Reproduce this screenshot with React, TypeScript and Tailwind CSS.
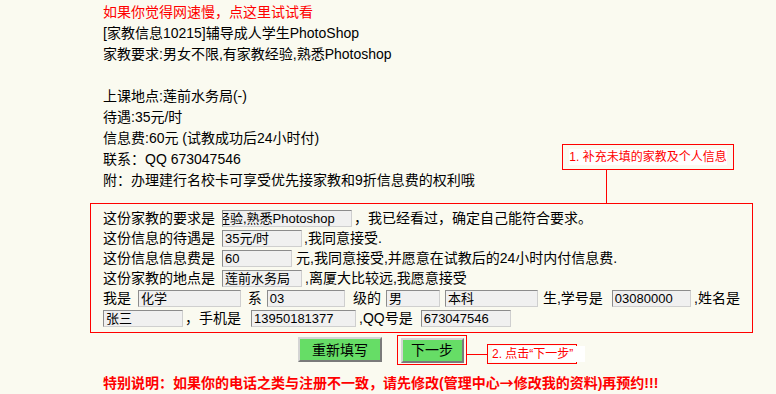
import type { ReactNode } from 'react';

const infoLines = [
  '[家教信息10215]辅导成人学生PhotoShop',
  '家教要求:男女不限,有家教经验,熟悉Photoshop',
  '',
  '上课地点:莲前水务局(-)',
  '待遇:35元/时',
  '信息费:60元 (试教成功后24小时付)',
  '联系：QQ 673047546',
  '附：办理建行名校卡可享受优先接家教和9折信息费的权利哦',
];

function Field({ width, children, className = '' }: { width: string; children: ReactNode; className?: string }) {
  return (
    <div
      className={`h-[17px] ${width} ${className} flex items-center overflow-hidden whitespace-nowrap border border-t-[#8c8c8c] border-l-[#8c8c8c] border-b-[#cfcfcf] border-r-[#cfcfcf] bg-[#f0f0f0] px-[2px] text-[13px] leading-[15px]`}
    >
      {children}
    </div>
  );
}

function Row({ children }: { children: ReactNode }) {
  return <div className="flex h-[20px] items-center whitespace-nowrap">{children}</div>;
}

export default function App() {
  return (
    <div className="relative min-h-[394px] w-full bg-[#fafaf0] font-['Liberation_Sans','Noto_Sans_CJK_SC',sans-serif] text-[14px] text-black">
      {/* Info text */}
      <div className="pl-[103px] pt-[2px] leading-[21px]">
        <div className="text-[#ff0000]">如果你觉得网速慢，点这里试试看</div>
        {infoLines.map((line, i) => (
          <div key={i} className="h-[21px]">
            {line}
          </div>
        ))}
      </div>

      {/* Form box */}
      <div className="ml-[90px] mt-[12px] w-[663px] border border-[#ff0000] px-[12px] pb-[4px] pt-[4px]">
        <Row>
          <span>这份家教的要求是</span>
          <Field width="w-[130px]" className="ml-[7px]">
            <span className="-ml-[8px]">经验,熟悉Photoshop</span>
          </Field>
          <span className="ml-[2px]">，我已经看过，确定自己能符合要求。</span>
        </Row>
        <Row>
          <span>这份信息的待遇是</span>
          <Field width="w-[80px]" className="ml-[7px]">35元/时</Field>
          <span className="ml-[2px]">,我同意接受.</span>
        </Row>
        <Row>
          <span>这份信息信息费是</span>
          <Field width="w-[70px]" className="ml-[7px]">60</Field>
          <span className="ml-[4px]">元,我同意接受,并愿意在试教后的24小时内付信息费.</span>
        </Row>
        <Row>
          <span>这份家教的地点是</span>
          <Field width="w-[80px]" className="ml-[7px]">莲前水务局</Field>
          <span className="ml-[3px]">,离厦大比较远,我愿意接受</span>
        </Row>
        <Row>
          <span>我是</span>
          <Field width="w-[105px]" className="ml-[7px]">化学</Field>
          <span className="ml-[7px]">系</span>
          <Field width="w-[80px]" className="ml-[5px]">03</Field>
          <span className="ml-[8px]">级的</span>
          <Field width="w-[55px]" className="ml-[5px]">男</Field>
          <Field width="w-[95px]" className="ml-[5px]">本科</Field>
          <span className="ml-[5px]">生,学号是</span>
          <Field width="w-[81px]" className="ml-[9px]">03080000</Field>
          <span className="ml-[3px]">,姓名是</span>
        </Row>
        <Row>
          <Field width="w-[80px]">张三</Field>
          <span className="ml-[2px]">，手机是</span>
          <Field width="w-[105px]" className="ml-[10px]">13950181377</Field>
          <span className="ml-[3px]">,QQ号是</span>
          <Field width="w-[90px]" className="ml-[8px]">673047546</Field>
        </Row>
      </div>

      {/* Buttons */}
      <div className="ml-[298px] mt-[2px] flex h-[30px] items-start">
        <button className="mt-[2px] h-[25px] w-[84px] border-2 border-t-[#d4d4d4] border-l-[#d4d4d4] border-b-[#7a7a7a] border-r-[#7a7a7a] bg-[#66dd66] text-[14px] leading-none">
          重新填写
        </button>
        <div className="ml-[15px] flex h-[30px] w-[70px] items-center justify-center border border-[#ff0000]">
          <button className="h-[25px] w-[63px] border-2 border-t-[#d4d4d4] border-l-[#d4d4d4] border-b-[#7a7a7a] border-r-[#7a7a7a] bg-[#66dd66] text-[14px] leading-none">
            下一步
          </button>
        </div>
        <div className="mt-[19px] h-px w-[20px] bg-[#ff0000]" />
        <div className="mt-[9px] flex h-[20px] w-[90px] items-center border border-[#ff0000] pl-[4px]">
          <span className="whitespace-nowrap bg-white pr-[12px] text-[12px] leading-[16px] text-[#ff0000]">2. 点击“下一步”</span>
        </div>
      </div>

      {/* Notice */}
      <div className="mt-[7px] pl-[103px] text-[14px] font-bold leading-[21px] text-[#ff0000]">
        特别说明：如果你的电话之类与注册不一致，请先修改(管理中心
        <span className="font-['Noto_Sans_CJK_SC',sans-serif]">→</span>
        修改我的资料)再预约!!!
      </div>

      {/* Annotation 1 */}
      <div className="absolute left-[562px] top-[144px] flex h-[26px] w-[172px] items-center justify-center border border-[#ff0000]">
        <span className="whitespace-nowrap bg-white text-[12px] leading-[16px] text-[#ff0000]">1. 补充未填的家教及个人信息</span>
      </div>
      <div className="absolute left-[606px] top-[170px] h-[33px] w-px bg-[#ff0000]" />
    </div>
  );
}
